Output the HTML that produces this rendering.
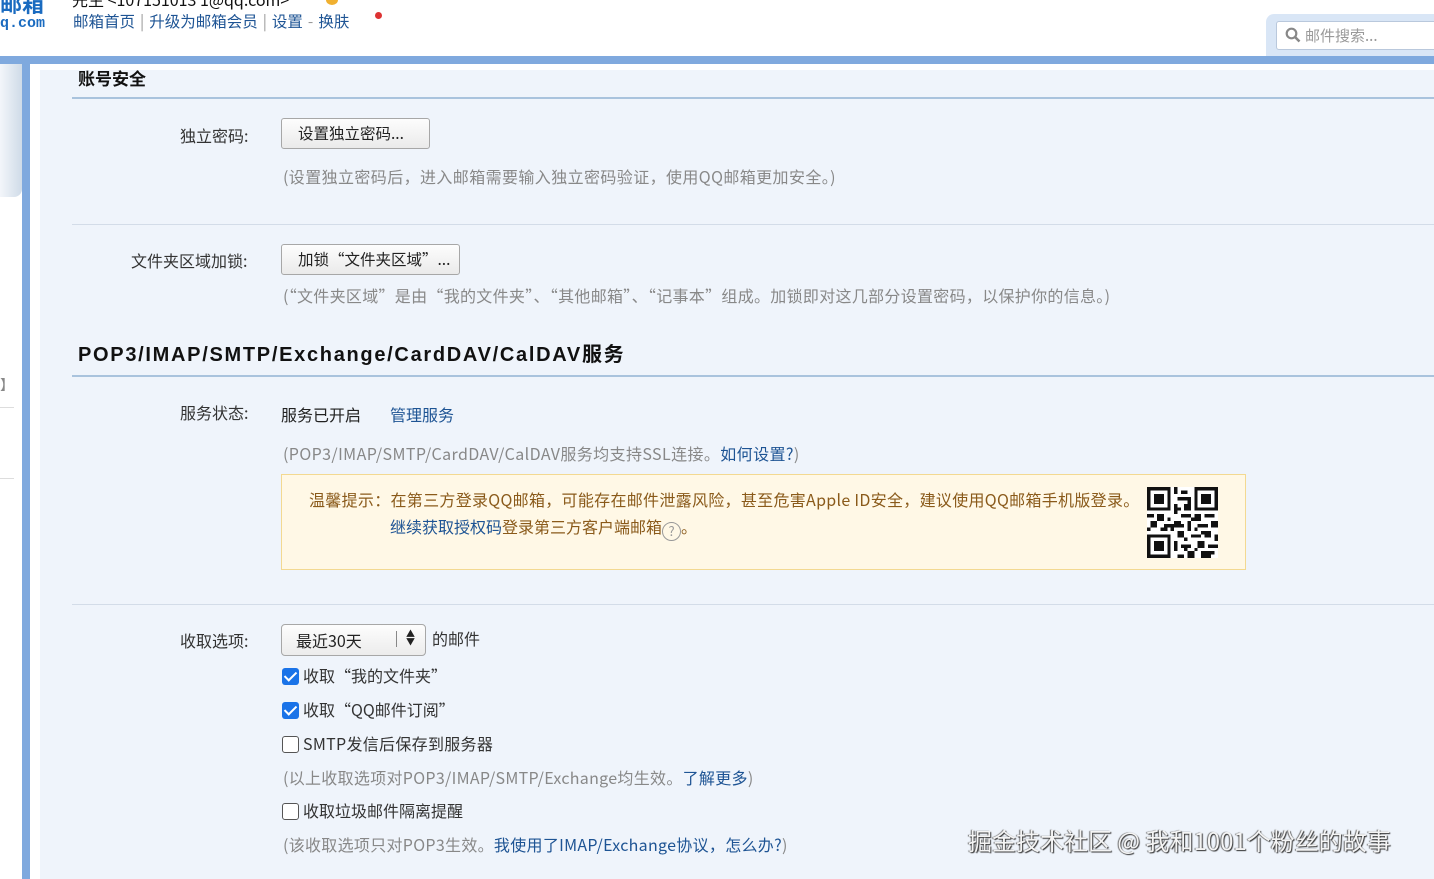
<!DOCTYPE html>
<html><head><meta charset="utf-8"><style>
*{margin:0;padding:0;box-sizing:border-box}
body{width:1434px;height:879px;overflow:hidden;background:#fff;font-family:"Noto Sans CJK SC","Liberation Sans",sans-serif;font-size:16px;color:#333;position:relative}
.a{position:absolute;white-space:nowrap;line-height:22px}
.lk{color:#1e5494}
.hint{color:#888}
.btn{position:absolute;white-space:nowrap;height:31px;border:1px solid #a7a7a7;border-radius:3px;background:linear-gradient(#fdfdfd,#eaeaea);font-size:15.5px;line-height:29px;padding:0 16px;color:#222}
.cb{position:absolute;width:17px;height:17px;border-radius:3px}
.on{background:#1a73e8}
.off{border:1.5px solid #555;background:#fff}
.on:after{content:"";position:absolute;left:5px;top:1px;width:5px;height:10px;border:solid #fff;border-width:0 2.5px 2.5px 0;transform:rotate(45deg)}
.sep{color:#999;padding:0 5px}
</style></head><body>
<!-- header -->
<div class="a" style="left:0;top:-8px;font-size:22px;font-weight:bold;color:#1a6bc0">邮箱</div>
<div class="a" style="left:0;top:13px;font-size:15px;font-weight:bold;color:#1a6bc0;font-family:'Liberation Mono',monospace">q.com</div>
<div class="a" style="left:72px;top:-12px;font-size:16px;color:#111">先生 &lt;107151013 1@qq.com&gt;</div>
<div class="a" style="left:326px;top:-5px;width:12px;height:10px;border-radius:50%;background:#f0b030"></div>
<div class="a" style="left:73px;top:10px;font-size:15.5px;color:#1e5494">邮箱首页<span class="sep">|</span>升级为邮箱会员<span class="sep">|</span>设置<span class="sep">-</span>换肤</div>
<div class="a" style="left:375px;top:12px;width:7px;height:7px;border-radius:50%;background:#d33"></div>
<div class="a" style="left:1266px;top:14px;width:180px;height:46px;border-radius:8px 0 0 0;background:#d9e6f6"></div>
<div class="a" style="left:1276px;top:21px;width:170px;height:29px;border:1px solid #b9c8dc;border-radius:3px;background:#fff;color:#999;font-size:15px;line-height:27px;padding-left:28px">邮件搜索...</div>
<svg class="a" style="left:1285px;top:27px" width="16" height="16"><circle cx="6.5" cy="6.5" r="4.8" fill="none" stroke="#888" stroke-width="2.2"/><path d="M10 10l4.5 4.5" stroke="#888" stroke-width="2.6"/></svg>
<!-- blue frame -->
<div class="a" style="left:0;top:56px;width:1434px;height:8px;background:#7fa9de"></div>
<div class="a" style="left:22px;top:56px;width:8px;height:823px;background:#7fa9de"></div>
<div class="a" style="left:0;top:64px;width:22px;height:133px;background:linear-gradient(90deg,#f3f6fa,#cfdbe8);border-radius:0 0 8px 0"></div>
<div class="a" style="left:0;top:204px;width:22px;height:675px;background:#fff;border-radius:0 8px 0 0"></div>
<div class="a" style="left:0;top:374px;font-size:14px;color:#888">】</div>
<div class="a" style="left:0;top:407px;width:14px;height:1px;background:#ddd"></div>
<div class="a" style="left:0;top:478px;width:14px;height:1px;background:#ddd"></div>
<div class="a" style="left:30px;top:64px;width:1404px;height:815px;background:#fff;border-radius:8px 0 0 0"></div>
<div class="a" style="left:40px;top:70px;width:1394px;height:809px;background:#eff4fb"></div>
<!-- section 1 -->
<div class="a" style="left:78px;top:67px;font-size:17px;font-weight:bold;color:#111">账号安全</div>
<div class="a" style="left:72px;top:97px;width:1362px;height:2px;background:#a9c3dd"></div>
<div class="a" style="left:180px;top:124px">独立密码:</div>
<div class="btn" style="left:281px;top:118px;width:149px">设置独立密码...</div>
<div class="a hint" style="left:283px;top:165px;letter-spacing:0.4px">(设置独立密码后，进入邮箱需要输入独立密码验证，使用QQ邮箱更加安全。)</div>
<div class="a" style="left:72px;top:224px;width:1362px;height:1px;background:#d3dce8"></div>
<div class="a" style="left:131px;top:249px">文件夹区域加锁:</div>
<div class="btn" style="left:281px;top:244px;width:179px;padding:0 10px 0 16px">加锁“文件夹区域”...</div>
<div class="a hint" style="left:283px;top:284px;letter-spacing:0.3px">(“文件夹区域”是由“我的文件夹”、“其他邮箱”、“记事本”组成。加锁即对这几部分设置密码，以保护你的信息。)</div>
<!-- section 2 -->
<div class="a" style="left:78px;top:344px;font-size:20px;font-weight:bold;color:#111;font-family:'Liberation Sans','Noto Sans CJK SC',sans-serif;letter-spacing:1.7px">POP3/IMAP/SMTP/Exchange/CardDAV/CalDAV服务</div>
<div class="a" style="left:72px;top:375px;width:1362px;height:2px;background:#a9c3dd"></div>
<div class="a" style="left:180px;top:401px">服务状态:</div>
<div class="a" style="left:281px;top:403px;color:#222">服务已开启</div>
<div class="a lk" style="left:390px;top:403px">管理服务</div>
<div class="a hint" style="left:283px;top:442px;letter-spacing:0.4px">(POP3/IMAP/SMTP/CardDAV/CalDAV服务均支持SSL连接。<span class="lk">如何设置?</span>)</div>
<div class="a" style="left:281px;top:474px;width:965px;height:96px;background:#fff8e6;border:1px solid #f3d991"></div>
<div class="a" style="left:309px;top:488px;color:#8a5a1a;font-size:16px;letter-spacing:0.3px">温馨提示：在第三方登录QQ邮箱，可能存在邮件泄露风险，甚至危害Apple ID安全，建议使用QQ邮箱手机版登录。</div>
<div class="a" style="left:390px;top:515px;color:#8a5a1a;font-size:16px"><span class="lk">继续获取授权码</span>登录第三方客户端邮箱<span style="display:inline-block;width:19px;height:19px;border:1.5px solid #999;border-radius:50%;color:#999;font-size:13px;line-height:16px;text-align:center;vertical-align:-3px">?</span>。</div>
<svg class="a" style="left:1147px;top:487px" width="71" height="71" viewBox="0 0 21 21" shape-rendering="crispEdges">
<rect width="21" height="21" fill="#fff"/>
<g fill="#111"><path d="M0 0h7v7h-7zM14 0h7v7h-7zM0 14h7v7h-7z"/></g>
<g fill="#fff"><path d="M1 1h5v5h-5zM15 1h5v5h-5zM1 15h5v5h-5z"/></g>
<g fill="#111"><path d="M2 2h3v3h-3zM16 2h3v3h-3zM2 16h3v3h-3z"/>
<path d="M8 0h1v2h-1zM10 1h2v1h-2zM9 3h3v1h-3zM8 5h1v3h-1zM11 5h2v2h-2zM10 8h3v1h-3zM0 8h2v1h-2zM3 8h2v2h-2zM1 10h2v2h-2zM5 11h3v1h-3zM8 10h2v2h-2zM12 10h1v3h-1zM14 8h2v2h-2zM17 8h3v1h-3zM19 10h2v2h-2zM15 11h3v1h-3zM9 13h2v2h-2zM13 14h3v1h-3zM17 13h2v2h-2zM8 16h1v3h-1zM10 17h3v1h-3zM12 19h2v2h-2zM15 16h2v2h-2zM18 17h3v1h-3zM16 19h3v2h-3zM9 20h2v1h-2zM0 12h1v1h-1zM4 12h2v1h-2zM11 15h1v1h-1zM14 12h1v1h-1zM20 14h1v2h-1zM6 9h1v1h-1zM9 6h1v1h-1zM12 3h1v2h-1zM10 11h1v1h-1zM13 9h1v1h-1zM7 12h1v1h-1zM16 13h1v1h-1zM11 18h1v1h-1zM14 18h1v1h-1zM19 19h1v1h-1z"/></g>
</svg>
<div class="a" style="left:72px;top:604px;width:1362px;height:1px;background:#d3dce8"></div>
<div class="a" style="left:180px;top:629px">收取选项:</div>
<div class="a" style="left:281px;top:624px;width:145px;height:32px;border:1px solid #a7a7a7;border-radius:4px;background:linear-gradient(#fdfdfd,#ececec);line-height:30px;padding-left:14px;font-size:16px;color:#222">最近30天</div>
<div class="a" style="left:396px;top:631px;width:1px;height:16px;background:#888"></div>
<div class="a" style="left:406px;top:630px;font-size:9px;line-height:8px;color:#222">▲<br>▼</div>
<div class="a" style="left:432px;top:627px">的邮件</div>
<div class="cb on" style="left:282px;top:668px"></div><div class="a" style="left:303px;top:664px">收取“我的文件夹”</div>
<div class="cb on" style="left:282px;top:702px"></div><div class="a" style="left:303px;top:698px">收取“QQ邮件订阅”</div>
<div class="cb off" style="left:282px;top:736px"></div><div class="a" style="left:303px;top:732px;letter-spacing:0.3px">SMTP发信后保存到服务器</div>
<div class="a hint" style="left:283px;top:766px;letter-spacing:0.3px">(以上收取选项对POP3/IMAP/SMTP/Exchange均生效。<span class="lk">了解更多</span>)</div>
<div class="cb off" style="left:282px;top:803px"></div><div class="a" style="left:303px;top:799px">收取垃圾邮件隔离提醒</div>
<div class="a hint" style="left:283px;top:833px;letter-spacing:0.3px">(该收取选项只对POP3生效。<span class="lk">我使用了IMAP/Exchange协议，怎么办?</span>)</div>
<div class="a" style="left:968px;top:824px;font-size:24px;line-height:32px;color:#f4f4f4;text-shadow:1px 1px 1px #333,-1px 0 1px #666">掘金技术社区 @ 我和1001个粉丝的故事</div>
</body></html>
